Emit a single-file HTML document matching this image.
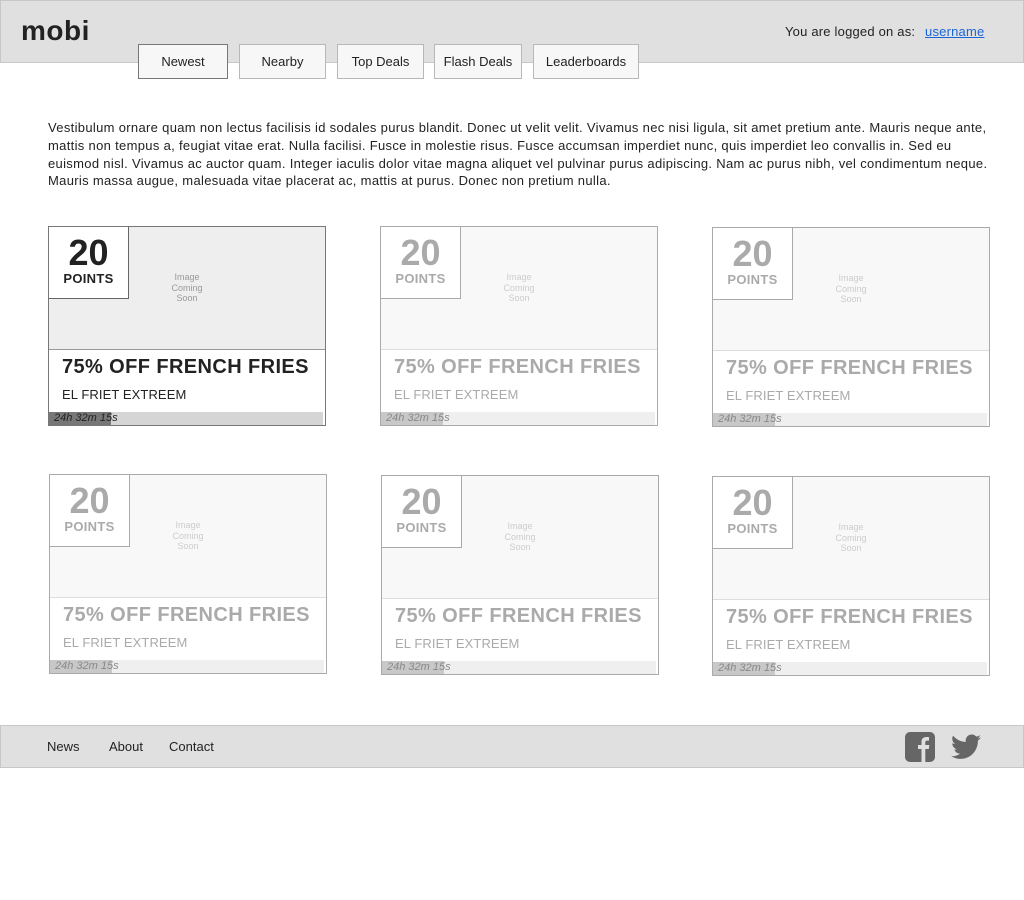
<!DOCTYPE html>
<html><head><meta charset="utf-8"><style>
*{box-sizing:border-box;margin:0;padding:0}
body{width:1024px;height:900px;background:#fff;font-family:"Liberation Sans",sans-serif;color:#222;position:relative;overflow:hidden}
.hdr{position:absolute;left:0;top:0;width:1024px;height:63px;background:#e0e0e0;border:1px solid #c8c8c8}
.logo{position:absolute;left:20px;top:14px;font-size:28px;font-weight:bold;color:#222;letter-spacing:0.5px}
.login{position:absolute;left:784px;top:23px;font-size:13px;color:#222;letter-spacing:.2px}
.login a{color:#1a66d6;text-decoration:underline;margin-left:6px}
.tab{position:absolute;top:44px;height:35px;background:#f7f7f7;border:1px solid #b8b8b8;font-size:13px;text-align:center;line-height:33px;color:#222}
.tab.act{border-color:#777}
.p{position:absolute;left:48px;top:119px;font-size:13px;line-height:17.8px;letter-spacing:.32px;white-space:nowrap;color:#222}
.card{position:absolute;width:278px;height:200px;border:1px solid #777;background:#fff}
.img{position:absolute;left:0;top:0;width:276px;height:123px;background:#eee;border-bottom:1px solid #999}
.pts{position:absolute;left:0;top:0;width:80px;height:72px;background:#fff;border-right:1px solid #666;border-bottom:1px solid #666;text-align:center}
.pts b{display:block;font-size:36px;line-height:36px;margin-top:8px;color:#222}
.pts span{display:block;font-size:13px;font-weight:bold;margin-top:0px;letter-spacing:.3px}
.ics{position:absolute;left:118px;top:45px;width:40px;text-align:center;font-size:9px;line-height:10.5px;color:#999}
.t{position:absolute;left:13px;top:129px;font-size:20px;font-weight:bold;letter-spacing:.4px;color:#222;white-space:nowrap}
.s{position:absolute;left:13px;top:160px;font-size:13px;color:#222;letter-spacing:.1px}
.bar{position:absolute;left:0;top:185px;width:274px;height:13px;background:#d5d5d5}
.bar i{position:absolute;left:0;top:0;width:62px;height:13px;background:#777}
.bar em{position:absolute;left:5px;top:0;font-size:11px;line-height:13px;color:#222;font-style:italic}
.f{border-color:#aaa}
.f .img{background:#f8f8f8;border-bottom-color:#ddd}
.f .pts{border-color:#aaa}
.f .pts b,.f .pts span,.f .t,.f .s{color:#aaa}
.f .ics{color:#ccc}
.f .bar{background:#efefef}
.f .bar i{background:#c8c8c8}
.f .bar em{color:#888}
.ftr{position:absolute;left:0;top:725px;width:1024px;height:43px;background:#e0e0e0;border:1px solid #c8c8c8}
.ftr a{position:absolute;top:13px;font-size:13px;color:#222;text-decoration:none}
</style></head><body>
<div class="hdr"><div class="logo">mobi</div><div class="login">You are logged on as: <a>username</a></div></div>
<div class="tab act" style="left:138px;width:90px">Newest</div>
<div class="tab" style="left:239px;width:87px">Nearby</div>
<div class="tab" style="left:337px;width:87px">Top Deals</div>
<div class="tab" style="left:434px;width:88px">Flash Deals</div>
<div class="tab" style="left:533px;width:106px">Leaderboards</div>
<div class="p">Vestibulum ornare quam non lectus facilisis id sodales purus blandit. Donec ut velit velit. Vivamus nec nisi ligula, sit amet pretium ante. Mauris neque ante,<br>mattis non tempus a, feugiat vitae erat. Nulla facilisi. Fusce in molestie risus. Fusce accumsan imperdiet nunc, quis imperdiet leo convallis in. Sed eu<br>euismod nisl. Vivamus ac auctor quam. Integer iaculis dolor vitae magna aliquet vel pulvinar purus adipiscing. Nam ac purus nibh, vel condimentum neque.<br>Mauris massa augue, malesuada vitae placerat ac, mattis at purus. Donec non pretium nulla.</div>

<div class="card" style="left:48px;top:226px"><div class="img"><div class="pts"><b>20</b><span>POINTS</span></div><div class="ics">Image<br>Coming<br>Soon</div></div><div class="t">75% OFF FRENCH FRIES</div><div class="s">EL FRIET EXTREEM</div><div class="bar"><i></i><em>24h 32m 15s</em></div></div>
<div class="card f" style="left:380px;top:226px"><div class="img"><div class="pts"><b>20</b><span>POINTS</span></div><div class="ics">Image<br>Coming<br>Soon</div></div><div class="t">75% OFF FRENCH FRIES</div><div class="s">EL FRIET EXTREEM</div><div class="bar"><i></i><em>24h 32m 15s</em></div></div>
<div class="card f" style="left:712px;top:227px"><div class="img"><div class="pts"><b>20</b><span>POINTS</span></div><div class="ics">Image<br>Coming<br>Soon</div></div><div class="t">75% OFF FRENCH FRIES</div><div class="s">EL FRIET EXTREEM</div><div class="bar"><i></i><em>24h 32m 15s</em></div></div>
<div class="card f" style="left:49px;top:474px"><div class="img"><div class="pts"><b>20</b><span>POINTS</span></div><div class="ics">Image<br>Coming<br>Soon</div></div><div class="t">75% OFF FRENCH FRIES</div><div class="s">EL FRIET EXTREEM</div><div class="bar"><i></i><em>24h 32m 15s</em></div></div>
<div class="card f" style="left:381px;top:475px"><div class="img"><div class="pts"><b>20</b><span>POINTS</span></div><div class="ics">Image<br>Coming<br>Soon</div></div><div class="t">75% OFF FRENCH FRIES</div><div class="s">EL FRIET EXTREEM</div><div class="bar"><i></i><em>24h 32m 15s</em></div></div>
<div class="card f" style="left:712px;top:476px"><div class="img"><div class="pts"><b>20</b><span>POINTS</span></div><div class="ics">Image<br>Coming<br>Soon</div></div><div class="t">75% OFF FRENCH FRIES</div><div class="s">EL FRIET EXTREEM</div><div class="bar"><i></i><em>24h 32m 15s</em></div></div>

<div class="ftr">
<a style="left:46px">News</a><a style="left:108px">About</a><a style="left:168px">Contact</a>
<svg style="position:absolute;left:904px;top:6px" width="30" height="30" viewBox="0 0 30 30"><rect x="0" y="0" width="30" height="30" rx="5" fill="#666"/><path d="M16.5 30V17h-3.5v-4h3.5v-3c0-3.2 1.8-5 4.8-5 1.3 0 2.3.1 2.7.2v3.4h-1.9c-1.5 0-1.8.7-1.8 1.8V13h4l-.5 4h-3.5v13z" fill="#e0e0e0"/></svg>
<svg style="position:absolute;left:950px;top:8px" width="30" height="26" viewBox="0 0 24 20"><path d="M24 2.4c-.9.4-1.8.6-2.8.8 1-.6 1.8-1.6 2.2-2.7-1 .6-2 1-3.1 1.2C19.3.6 18 0 16.6 0c-2.7 0-4.9 2.2-4.9 4.9 0 .4 0 .8.1 1.1C7.7 5.8 4.1 3.9 1.7.9c-.4.7-.7 1.6-.7 2.5 0 1.7.9 3.2 2.2 4.1-.8 0-1.6-.2-2.200-.6v.1c0 2.4 1.7 4.4 3.9 4.8-.4.1-.8.2-1.3.2-.3 0-.6 0-.9-.1.6 2 2.4 3.4 4.6 3.4-1.7 1.3-3.8 2.1-6.1 2.1-.4 0-.8 0-1.2-.1 2.2 1.4 4.8 2.200 7.5 2.200 9.1 0 14-7.5 14-14v-.6c1-.7 1.8-1.6 2.5-2.5z" fill="#666"/></svg>
</div>
</body></html>
